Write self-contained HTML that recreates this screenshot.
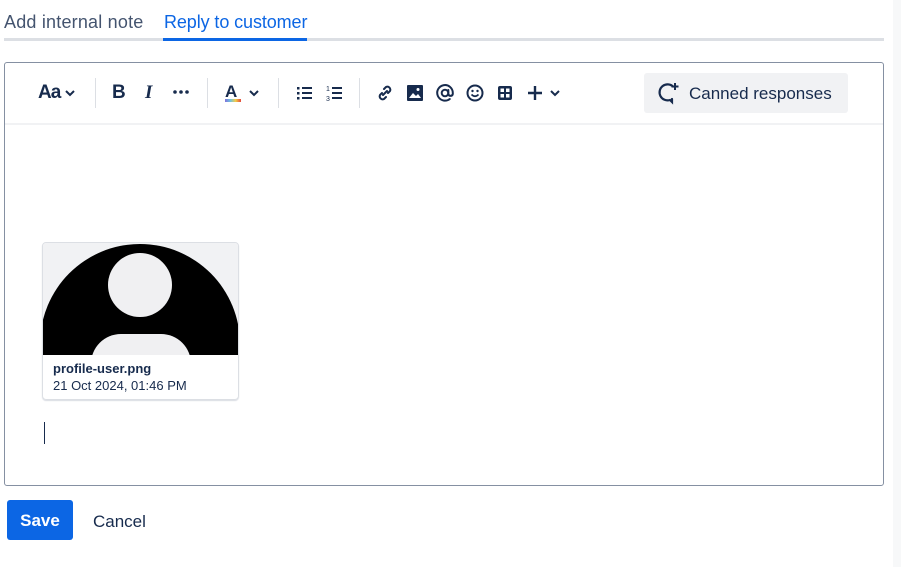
<!DOCTYPE html>
<html><head><style>
body{margin:0;width:901px;height:567px;background:#fff;font-family:"Liberation Sans",sans-serif;position:relative;overflow:hidden;color:#172b4d}
.a{position:absolute}
.tab{font-size:18px;top:12px;letter-spacing:0.2px}
.sep{position:absolute;top:78px;width:1px;height:30px;background:#dcdfe4}
svg{position:absolute}
</style></head><body>
<div class="a tab" style="left:4px;color:#44546f">Add internal note</div>
<div class="a tab" style="left:164px;color:#0c66e4;letter-spacing:-0.1px">Reply to customer</div>
<div class="a" style="left:4px;top:38px;width:880px;height:3px;background:#dcdfe4"></div>
<div class="a" style="left:163px;top:38px;width:144px;height:3px;background:#0c66e4"></div>
<div class="a" style="left:893px;top:0;width:8px;height:567px;background:#f7f8f9"></div>

<div class="a" style="left:4px;top:62px;width:878px;height:422px;border:1px solid #8590a2;border-radius:3px"></div>
<div class="a" style="left:5px;top:123px;width:878px;height:2px;background:#f1f2f4"></div>

<div class="a" style="left:38px;top:82px;font-size:19px;font-weight:bold;letter-spacing:-1px">Aa</div>
<svg style="left:64px;top:88px" width="12" height="10"><path d="M2 3l4 4 4-4" stroke="#172b4d" stroke-width="2" fill="none"/></svg>
<div class="sep" style="left:95px"></div>
<div class="a" style="left:112px;top:82px;font-size:19px;font-weight:bold">B</div>
<div class="a" style="left:145px;top:82px;font-size:19px;font-weight:bold;font-style:italic;font-family:'Liberation Serif',serif">I</div>
<svg style="left:172px;top:88px" width="18" height="8" fill="#172b4d"><circle cx="3" cy="4" r="1.8"/><circle cx="9" cy="4" r="1.8"/><circle cx="15" cy="4" r="1.8"/></svg>
<div class="sep" style="left:207px"></div>
<div class="a" style="left:225px;top:82px;font-size:17px;font-weight:bold">A</div>
<div class="a" style="left:225px;top:99px;width:16px;height:3px;background:linear-gradient(90deg,#8270db,#6cc3e0,#f5cd47,#e2483d)"></div>
<svg style="left:248px;top:88px" width="12" height="10"><path d="M2 3l4 4 4-4" stroke="#172b4d" stroke-width="2" fill="none"/></svg>
<div class="sep" style="left:278px"></div>
<svg style="left:296px;top:85px" width="18" height="16" fill="#172b4d"><rect x="1" y="2" width="2.5" height="2.5"/><rect x="1" y="7" width="2.5" height="2.5"/><rect x="1" y="12" width="2.5" height="2.5"/><rect x="6" y="2" width="10" height="2"/><rect x="6" y="7" width="10" height="2"/><rect x="6" y="12" width="10" height="2"/></svg>
<svg style="left:326px;top:84px" width="18" height="18" fill="#172b4d"><text x="0" y="7" font-size="7" font-family="Liberation Sans">1</text><text x="0" y="17" font-size="7" font-family="Liberation Sans">3</text><rect x="6" y="3" width="10" height="2"/><rect x="6" y="8" width="10" height="2"/><rect x="6" y="13" width="10" height="2"/></svg>
<div class="sep" style="left:359px"></div>
<svg style="left:375px;top:83px" width="20" height="20"><path d="M8 12l4-4M9 6l2-2a3 3 0 014 4l-2 2M11 14l-2 2a3 3 0 01-4-4l2-2" stroke="#172b4d" stroke-width="2" fill="none" stroke-linecap="round"/></svg>
<svg style="left:406px;top:84px" width="18" height="18"><rect x="1" y="1" width="16" height="16" rx="1" fill="#172b4d"/><path d="M3 14l4-5 3 3 2-2 3 4z" fill="#fff"/><circle cx="12" cy="5.5" r="1.5" fill="#fff"/></svg>
<svg style="left:435px;top:83px" width="20" height="20"><circle cx="10" cy="10" r="3.3" stroke="#172b4d" stroke-width="2" fill="none"/><path d="M13.3 7v4a2.3 2.3 0 0 0 4.5 0V10a7.8 7.8 0 1 0-3 6" stroke="#172b4d" stroke-width="2" fill="none" stroke-linecap="round"/></svg>
<svg style="left:465px;top:83px" width="20" height="20"><circle cx="10" cy="10" r="7.5" stroke="#172b4d" stroke-width="2" fill="none"/><circle cx="7.5" cy="8" r="1.2" fill="#172b4d"/><circle cx="12.5" cy="8" r="1.2" fill="#172b4d"/><path d="M6.5 11.5q3.5 3.5 7 0" stroke="#172b4d" stroke-width="1.6" fill="none"/></svg>
<svg style="left:496px;top:84px" width="18" height="18"><rect x="2" y="2" width="14" height="14" rx="2" fill="#172b4d"/><rect x="4.5" y="4.5" width="3.5" height="3.5" fill="#fff"/><rect x="10" y="4.5" width="3.5" height="3.5" fill="#fff"/><rect x="4.5" y="10" width="3.5" height="3.5" fill="#fff"/><rect x="10" y="10" width="3.5" height="3.5" fill="#fff"/></svg>
<svg style="left:526px;top:84px" width="18" height="18"><path d="M9 2v14M2 9h14" stroke="#172b4d" stroke-width="2.4"/></svg>
<svg style="left:549px;top:88px" width="12" height="10"><path d="M2 3l4 4 4-4" stroke="#172b4d" stroke-width="2" fill="none"/></svg>

<div class="a" style="left:644px;top:73px;width:204px;height:40px;background:#f1f2f4;border-radius:3px"></div>
<svg style="left:656px;top:81px" width="26" height="24"><path d="M17 5.5A8 8 0 1 0 14 19l2 2v-3" stroke="#172b4d" stroke-width="2.2" fill="none" stroke-linecap="round"/><path d="M19 2v7M15.5 5.5h7" stroke="#172b4d" stroke-width="2"/></svg>
<div class="a" style="left:689px;top:84px;font-size:17px;color:#172b4d">Canned responses</div>

<div class="a" style="left:42px;top:242px;width:195px;height:156px;border:1px solid #dcdfe4;border-radius:4px;overflow:hidden;box-shadow:0 1px 1px rgba(9,30,66,.15)">
<div class="a" style="left:0;top:0;width:195px;height:112px;background:#f1f2f4;overflow:hidden">
<div class="a" style="left:-3px;top:1px;width:200px;height:200px;border-radius:50%;background:#000"></div>
<div class="a" style="left:65px;top:10px;width:64px;height:64px;border-radius:50%;background:#f0f0f2"></div>
<div class="a" style="left:48px;top:91px;width:100px;height:60px;border-radius:30px;background:#f0f0f2"></div>
</div>
<div class="a" style="left:10px;top:118px;font-size:13px;font-weight:bold">profile-user.png</div>
<div class="a" style="left:10px;top:135px;font-size:13px">21 Oct 2024, 01:46 PM</div>
</div>
<div class="a" style="left:44px;top:422px;width:1px;height:22px;background:#172b4d"></div>

<div class="a" style="left:7px;top:500px;width:66px;height:40px;background:#0c66e4;border-radius:3px;color:#fff;font-weight:bold;font-size:17px;line-height:42px;text-align:center">Save</div>
<div class="a" style="left:93px;top:512px;font-size:17px;color:#172b4d">Cancel</div>
</body></html>
